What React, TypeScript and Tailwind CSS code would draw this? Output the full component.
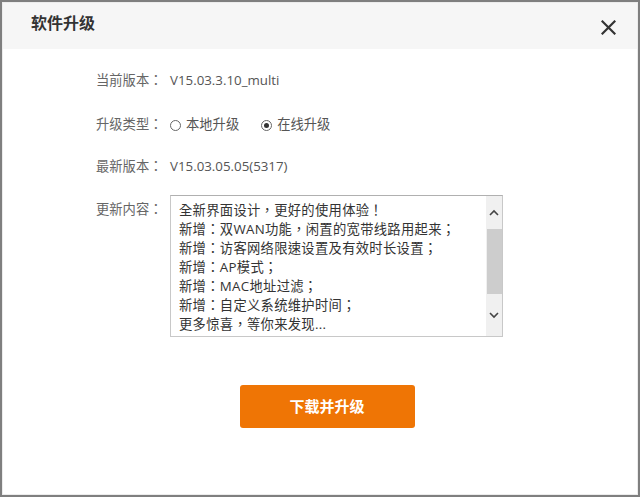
import React from "react";

const font = { fontFamily: '"Open Sans", "Noto Sans CJK TC", "Noto Sans CJK SC", sans-serif' };

const lines = [
  "全新界面设计，更好的使用体验！",
  "新增：双WAN功能，闲置的宽带线路用起来；",
  "新增：访客网络限速设置及有效时长设置；",
  "新增：AP模式；",
  "新增：MAC地址过滤；",
  "新增：自定义系统维护时间；",
  "更多惊喜，等你来发现...",
];

export default function App() {
  return (
    <div
      className="w-[640px] h-[497px] bg-white border-2 border-[#7f7f7f] box-border [text-spacing-trim:space-all]"
      style={font}
    >
      <div className="w-full h-full border border-[#ececec] box-border flex flex-col">
        <div className="h-[46px] bg-[#f6f6f6] flex items-center justify-between pl-[28px] pr-[21px] shrink-0">
          <span className="text-[16px] font-bold text-[#333] leading-none -mt-[6px]">软件升级</span>
          <svg width="15" height="15" viewBox="0 0 15 15" className="mt-[3px]">
            <path d="M1.5 1.5 L13.5 13.5 M13.5 1.5 L1.5 13.5" stroke="#333" strokeWidth="2.2" strokeLinecap="square" />
          </svg>
        </div>
        <div className="flex flex-col pl-[93px] text-[13.3px] text-[#666]">
          <div className="flex items-center h-[20px] mt-[22px]">
            <span className="w-[74px]">当前版本：</span>
            <span className="text-[#555]">V15.03.3.10_multi</span>
          </div>
          <div className="flex items-center h-[20px] mt-[24px]">
            <span className="w-[74px]">升级类型：</span>
            <span className="flex items-center text-[#555]">
              <span className="w-[11px] h-[11px] rounded-full border border-[#666] box-border mr-[5px]"></span>
              本地升级
            </span>
            <span className="flex items-center text-[#555] ml-[22px]">
              <span className="w-[11px] h-[11px] rounded-full border border-[#666] box-border mr-[5px] flex items-center justify-center">
                <span className="w-[5px] h-[5px] rounded-full bg-[#333]"></span>
              </span>
              在线升级
            </span>
          </div>
          <div className="flex items-center h-[20px] mt-[22px]">
            <span className="w-[74px]">最新版本：</span>
            <span className="text-[#555]">V15.03.05.05(5317)</span>
          </div>
          <div className="flex items-start mt-[18px]">
            <span className="w-[74px] mt-[5px]">更新内容：</span>
            <div className="w-[333px] h-[142px] border border-[#c8c8c8] border-t-[#b0b0b0] box-border flex">
              <div className="flex-1 pl-[8px] pt-[5px] text-[#333] leading-[19px] tracking-[0.3px] overflow-hidden">
                {lines.map((l) => (
                  <div key={l} className="whitespace-nowrap">{l}</div>
                ))}
              </div>
              <div className="w-[16px] h-full bg-[#f0f0f0] flex flex-col items-center">
                <div className="h-[33px] w-full flex items-center justify-center">
                  <svg width="10" height="7" viewBox="0 0 10 7">
                    <path d="M1 6 L5 2 L9 6" stroke="#444" strokeWidth="1.6" fill="none" />
                  </svg>
                </div>
                <div className="h-[65px] w-[15px] bg-[#cdcdcd]"></div>
                <div className="flex-1 w-full flex items-center justify-center">
                  <svg width="10" height="7" viewBox="0 0 10 7">
                    <path d="M1 1 L5 5 L9 1" stroke="#444" strokeWidth="1.6" fill="none" />
                  </svg>
                </div>
              </div>
            </div>
          </div>
        </div>
        <div className="flex justify-center mt-[48px] pl-[14px]">
          <button className="w-[175px] h-[43px] rounded-[3px] bg-[#ef7505] text-white text-[15px] font-bold">
            下载并升级
          </button>
        </div>
      </div>
    </div>
  );
}
